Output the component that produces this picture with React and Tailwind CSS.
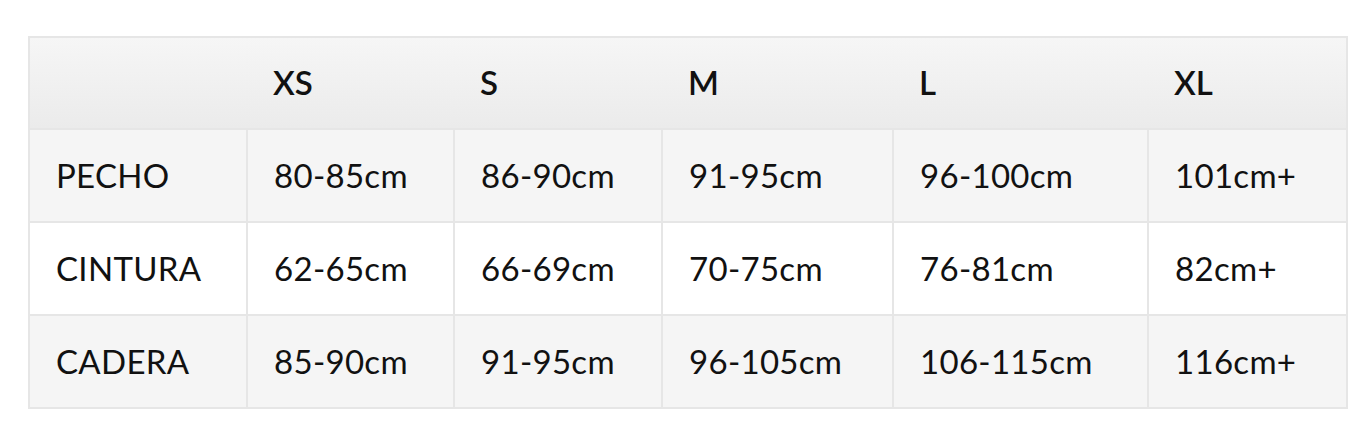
const sizes = ["XS", "S", "M", "L", "XL"];

const rows = [
  { label: "PECHO", values: ["80-85cm", "86-90cm", "91-95cm", "96-100cm", "101cm+"], shaded: true },
  { label: "CINTURA", values: ["62-65cm", "66-69cm", "70-75cm", "76-81cm", "82cm+"], shaded: false },
  { label: "CADERA", values: ["85-90cm", "91-95cm", "96-105cm", "106-115cm", "116cm+"], shaded: true },
];

export default function App() {
  return (
    <div className="min-h-screen bg-white pl-[28px] pt-[36px] font-['Lato',sans-serif] text-[#111]">
      <table className="w-[1318px] table-fixed border-collapse border-2 border-[#e6e6e6]">
        <colgroup>
          <col className="w-[218px]" />
          <col className="w-[207px]" />
          <col className="w-[208px]" />
          <col className="w-[231px]" />
          <col className="w-[255px]" />
          <col className="w-[199px]" />
        </colgroup>
        <thead>
          {/* header row, no vertical dividers */}
          <tr className="h-[92px] border-b-2 border-[#dcdcdc]">
            <th className="bg-linear-to-b from-[#f6f6f6] to-[#ebebeb]"></th>
            {sizes.map((s) => (
              <th
                key={s}
                className="bg-linear-to-b from-[#f6f6f6] to-[#ebebeb] pl-[26px] text-left text-[33px] font-semibold"
              >
                {s}
              </th>
            ))}
          </tr>
        </thead>
        <tbody>
          {rows.map((row) => (
            <tr
              key={row.label}
              className={`h-[93px] ${row.shaded ? "bg-[#f5f5f5]" : "bg-white"}`}
            >
              <td className="border-2 border-[#e6e6e6] pl-[26px] text-[33px] font-normal tracking-[0.3px]">
                {row.label}
              </td>
              {row.values.map((v, i) => (
                <td
                  key={i}
                  className="border-2 border-[#e6e6e6] pl-[26px] text-[33px] font-normal tracking-[0.3px]"
                >
                  {v}
                </td>
              ))}
            </tr>
          ))}
        </tbody>
      </table>
    </div>
  );
}
